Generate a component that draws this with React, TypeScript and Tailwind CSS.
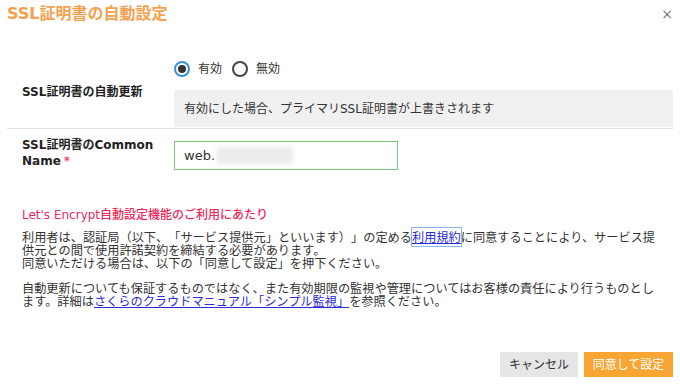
import React from "react";

const JP = "font-['DejaVu_Sans','Noto_Sans_CJK_JP',sans-serif]";

const Radio: React.FC<{ checked?: boolean; label: string }> = ({ checked, label }) => (
  <label className="flex items-center gap-[8px] mr-[10px]">
    {checked ? (
      <span className="w-[16px] h-[16px] rounded-full border-[2px] border-[#3d8fe0] flex items-center justify-center">
        <span className="w-[8px] h-[8px] rounded-full bg-[#333]" />
      </span>
    ) : (
      <span className="w-[16px] h-[16px] rounded-full border-[2px] border-[#444]" />
    )}
    <span className="text-[12px] text-[#333]">{label}</span>
  </label>
);

export default function App() {
  return (
    <div className={`w-[680px] h-[385px] bg-white flex flex-col px-[7px] ${JP}`}>
      {/* header */}
      <div className="h-[28px] flex items-center justify-between">
        <h1 className="text-[16px] font-bold text-[#f7a14e] leading-[20px]">SSL証明書の自動設定</h1>
        <span className="text-[14px] text-[#777] leading-none">×</span>
      </div>

      {/* auto renew */}
      <div className="mt-[30px] flex border-b border-[#e2e2e2] pb-[1px]">
        <div className="w-[167px] pl-[15px] pt-[21px]">
          <span className="text-[12px] font-bold text-[#222] leading-[16px]">SSL証明書の自動更新</span>
        </div>
        <div className="flex-1 flex flex-col">
          <div className="h-[22px] flex items-center">
            <Radio checked label="有効" />
            <Radio label="無効" />
          </div>
          <div className="mt-[10px] h-[37px] bg-[#f0f0f0] flex items-center pl-[10px] text-[12px] text-[#333]">
            有効にした場合、プライマリSSL証明書が上書きされます
          </div>
        </div>
      </div>

      {/* common name */}
      <div className="flex">
        <div className="w-[167px] pl-[15px] pt-[8px] text-[12px] font-bold text-[#222] leading-[16px]">
          SSL証明書のCommon
          <br />
          Name<span className="text-[#f0506e] ml-[3px]">*</span>
        </div>
        <div className="mt-[12px] w-[224px] h-[29px] border border-[#7cc57c] flex items-center pl-[9px]">
          <span className="text-[13px] text-[#333]">web.</span>
          <span className="ml-[2px] w-[76px] h-[17px] bg-[#ececec] blur-[2px]" />
        </div>
      </div>

      {/* notice */}
      <div className="pl-[15px] mt-[37px]">
        <h2 className="text-[12px] font-medium text-[#f0285a] leading-[16px]">Let's Encrypt自動設定機能のご利用にあたり</h2>
        <div className="mt-[8px] w-[640px] text-[12.2px] text-[#333] leading-[13px] font-['Noto_Sans_CJK_JP',sans-serif] [text-spacing-trim:space-all]">
          <p>
            利用者は、認証局（以下、「サービス提供元」といいます）」の定める
            <a className="text-[#2b2bd8] underline outline outline-1 outline-[#8ab6f0]">利用規約</a>
            に同意することにより、サービス提供元との間で使用許諾契約を締結する必要があります。
            <br />
            同意いただける場合は、以下の「同意して設定」を押下ください。
          </p>
          <p className="mt-[12px]">
            自動更新についても保証するものではなく、また有効期限の監視や管理についてはお客様の責任により行うものとします。詳細は
            <a className="text-[#2b2bd8] underline">さくらのクラウドマニュアル「シンプル監視」</a>
            を参照ください。
          </p>
        </div>
      </div>

      {/* footer */}
      <div className="mt-auto mb-[8px] flex justify-end gap-[6px]">
        <button className="w-[78px] h-[25px] bg-[#e6e6e6] text-[12px] text-[#333]">キャンセル</button>
        <button className="w-[89px] h-[25px] bg-[#f8a534] text-[12px] text-white">同意して設定</button>
      </div>
    </div>
  );
}
